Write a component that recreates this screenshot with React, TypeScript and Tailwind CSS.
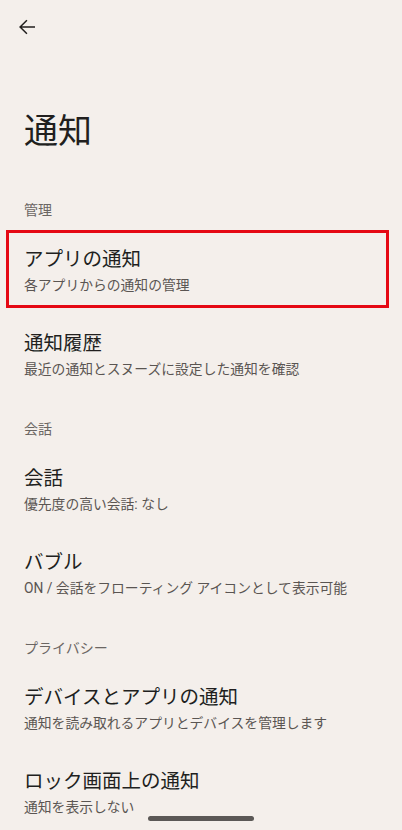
import React from "react";

interface ItemProps {
  title: string;
  subtitle: string;
  highlighted?: boolean;
}

const sections: { header: string; items: ItemProps[] }[] = [
  {
    header: "管理",
    items: [
      { title: "アプリの通知", subtitle: "各アプリからの通知の管理", highlighted: true },
      { title: "通知履歴", subtitle: "最近の通知とスヌーズに設定した通知を確認" },
    ],
  },
  {
    header: "会話",
    items: [
      { title: "会話", subtitle: "優先度の高い会話: なし" },
      { title: "バブル", subtitle: "ON / 会話をフローティング アイコンとして表示可能" },
    ],
  },
  {
    header: "プライバシー",
    items: [
      { title: "デバイスとアプリの通知", subtitle: "通知を読み取れるアプリとデバイスを管理します" },
      { title: "ロック画面上の通知", subtitle: "通知を表示しない" },
    ],
  },
];

function SettingItem({ title, subtitle, highlighted }: ItemProps) {
  return (
    <div className="relative px-6 pb-[17px] pt-[19px]">
      <div className="text-[19.5px] leading-[26px] text-[#211f1e]">{title}</div>
      <div className="mt-[2px] text-[13.8px] leading-[20px] text-[#5a5552]">{subtitle}</div>
      {highlighted && (
        <div className="pointer-events-none absolute left-[6px] right-[13px] top-[2px] bottom-[4px] border-[3px] border-[#e50914]" />
      )}
    </div>
  );
}

export default function App() {
  return (
    <div
      className="relative h-[830px] w-[402px] overflow-hidden bg-[#f4efeb]"
      style={{ fontFamily: 'Roboto, "Noto Sans CJK JP", "Noto Sans", sans-serif' }}
    >
      {/* top bar */}
      <div className="flex h-14 items-start pl-[15px] pt-[15px]">
        <svg width="24" height="24" viewBox="0 0 24 24" fill="#211f1e">
          <path d="M20 11.25H6.9l5.55-5.55L11.4 4.65 4.05 12l7.35 7.35 1.05-1.05-5.55-5.55H20v-1.5z" />
        </svg>
      </div>

      {/* big title */}
      <div className="px-6 pb-[26px] pt-[55px]">
        <h1 className="text-[34px] leading-[40px] text-[#211f1e]">通知</h1>
      </div>

      {sections.map((section) => (
        <div key={section.header}>
          <div className="px-6 pb-[8px] pt-[23px] text-[14px] leading-[20px] text-[#6b6663]">
            {section.header}
          </div>
          {section.items.map((item) => (
            <SettingItem key={item.title} {...item} />
          ))}
        </div>
      ))}

      {/* gesture bar */}
      <div className="absolute bottom-[9px] left-[148px] h-[5px] w-[106px] rounded-full bg-[#5b5856]" />
    </div>
  );
}
